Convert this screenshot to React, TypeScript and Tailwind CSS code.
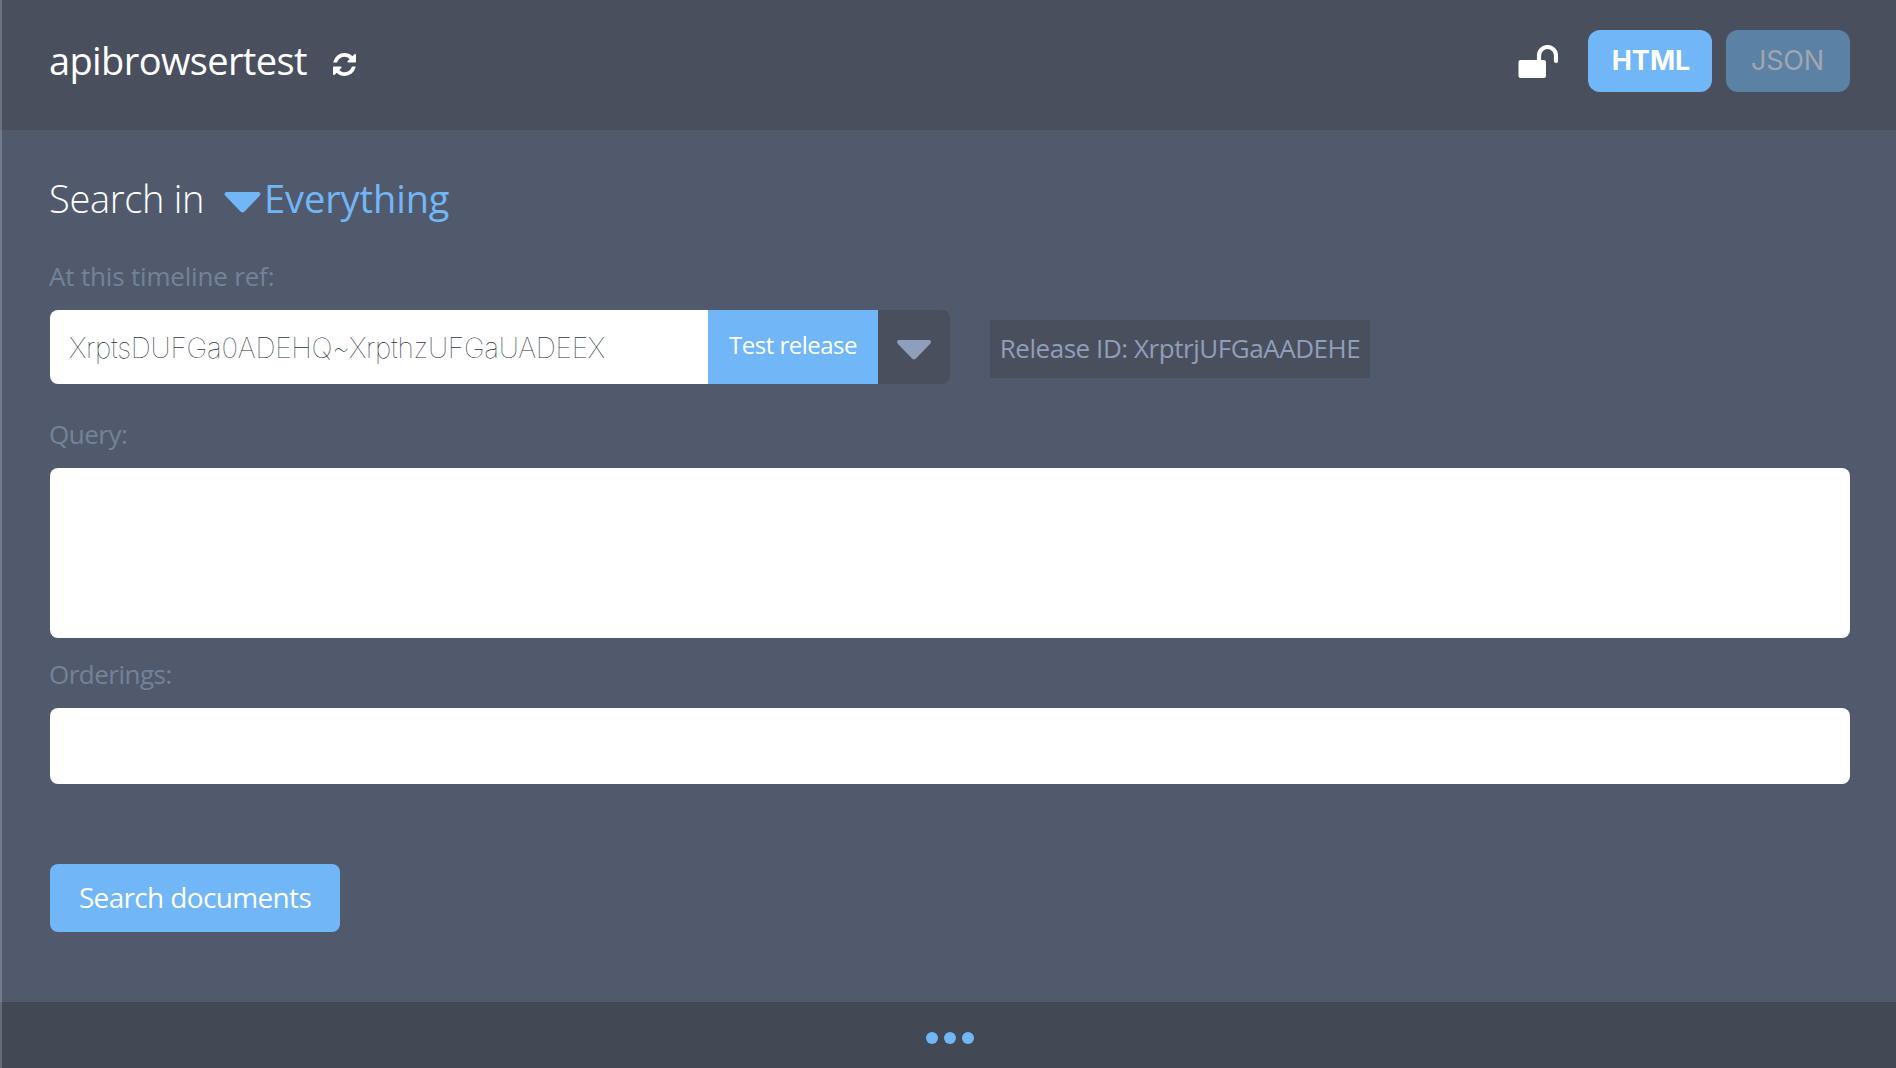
function RefreshIcon() {
  return (
    <svg className="h-[23px] w-[23px]" viewBox="0 0 1536 1536" fill="#fff">
      <path d="M1511 928q0 5-1 7-64 268-268 434.500T764 1536q-146 0-282.500-55T238 1324l-129 129q-19 19-45 19t-45-19-19-45V960q0-26 19-45t45-19h448q26 0 45 19t19 45-19 45l-137 137q71 66 161 102t187 36q134 0 250-65t186-179q11-17 53-117 8-23 30-23h192q13 0 22.500 9.500t9.500 22.500zm25-800v448q0 26-19 45t-45 19h-448q-26 0-45-19t-19-45 19-45l138-138Q969 256 768 256q-134 0-250 65T332 500q-11 17-53 117-8 23-30 23H50q-13 0-22.500-9.500T18 608v-7q65-268 270-434.500T768 0q146 0 284 55.500T1297 212l130-129q19-19 45-19t45 19 19 45z" />
    </svg>
  );
}

function UnlockIcon() {
  return (
    <svg className="h-[34px] w-[40px]" viewBox="0 0 40 34" fill="none">
      <rect x="0.500" y="15" width="27.500" height="18" rx="2" fill="#fff" />
      <path d="M21 16V10.500a8.500 8.500 0 0 1 17 0V16" stroke="#fff" strokeWidth="4.200" strokeLinecap="round" />
    </svg>
  );
}

function Caret({ className }: { className: string }) {
  return (
    <svg className={className} viewBox="0 0 36 21" fill="currentColor">
      <path d="M2 0H34Q35.200 0 35.800 1.200T35.200 3.800L19.800 19.800Q18 21.400 16.200 19.800L.8 3.800Q-.4 2.400.2 1.200T2 0Z" />
    </svg>
  );
}

export default function App() {
  return (
    <div className="flex h-[1068px] w-full flex-col overflow-hidden bg-[#515a6c] font-['Open_Sans',sans-serif] text-white">
      <div className="absolute inset-y-0 left-0 h-[1068px] w-0.5 bg-white/20" />

      <header className="flex h-[130px] shrink-0 items-start justify-between bg-[#4a4f5e] pl-[49px] pr-[46px] pt-[30px]">
        <div className="flex h-[62px] items-center">
          <h1 className="-mt-[3px] w-[284px] text-[38px] leading-[62px] tracking-[-0.62px]">apibrowsertest</h1>
          <div className="mt-[7px]"><RefreshIcon /></div>
        </div>
        <div className="flex h-[62px] items-center font-['Inter',sans-serif] text-[27px]">
          <div className="mr-[30px] pt-[2px]"><UnlockIcon /></div>
          <button className="mr-[14px] h-[62px] w-[124px] rounded-xl bg-[#71b6f7] pl-0.5 pt-px font-bold">HTML</button>
          <button className="h-[62px] w-[124px] rounded-xl bg-[#5b81a5] pr-px pt-px tracking-[-0.2px] text-[#a2a5ae]">JSON</button>
        </div>
      </header>

      <main className="flex flex-1 flex-col items-start pl-[50px] pr-[46px] pt-[43px]">
        <div className="flex h-[50px] items-center text-[38px] leading-[50px]">
          <span className="-ml-px w-[157px] font-light tracking-[-0.3px]">Search in</span>
          <Caret className="ml-[18px] mt-[8px] h-[21px] w-[37px] text-[#71b6f7]" />
          <span className="ml-[3px] tracking-[-0.1px] text-[#71b6f7]">Everything</span>
        </div>

        <label className="-ml-px mt-[33px] h-[54px] text-[26px] leading-[40px] tracking-[-0.18px] text-[#748299]">At this timeline ref:</label>
        <div className="flex items-center">
          <div className="flex h-[74px] overflow-hidden rounded-lg">
            <div className="w-[658px] bg-white pl-[19px] pt-px font-['Inter',sans-serif] text-[28px] font-[140] leading-[74px] tracking-[-0.24px] text-[#2f3440]">XrptsDUFGa0ADEHQ~XrpthzUFGaUADEEX</div>
            <div className="w-[170px] bg-[#71b6f7] text-center text-[24px] leading-[70px] tracking-[-0.5px]">Test release</div>
            <div className="flex w-[72px] items-center justify-center bg-[#4a4f5e] pt-[5px]">
              <Caret className="h-[20px] w-[34px] text-[#8f9ebb]" />
            </div>
          </div>
          <div className="ml-[40px] mt-[4px] h-[58px] w-[380px] whitespace-nowrap bg-[#4a4f5e] text-center text-[26px] leading-[56px] tracking-[-0.45px] text-[#8f9ebb]">Release ID: XrptrjUFGaAADEHE</div>
        </div>

        <label className="-ml-px mt-[30px] h-[54px] text-[26px] leading-[40px] tracking-[-0.5px] text-[#748299]">Query:</label>
        <div className="h-[170px] w-full rounded-lg bg-white" />

        <label className="-ml-px mt-[16px] h-[54px] text-[26px] leading-[40px] tracking-[-0.5px] text-[#748299]">Orderings:</label>
        <div className="h-[76px] w-full rounded-lg bg-white" />

        <button className="mt-[80px] h-[68px] w-[290px] rounded-lg bg-[#71b6f7] pb-[3px] text-[28px] leading-[64px] tracking-[-0.65px]">Search documents</button>
      </main>

      <footer className="flex h-[66px] shrink-0 items-center justify-center gap-[6px] bg-[#434855] pl-1 pt-[6px]">
        <span className="h-3 w-3 rounded-full bg-[#71b6f7]" />
        <span className="h-3 w-3 rounded-full bg-[#71b6f7]" />
        <span className="h-3 w-3 rounded-full bg-[#71b6f7]" />
      </footer>
    </div>
  );
}
